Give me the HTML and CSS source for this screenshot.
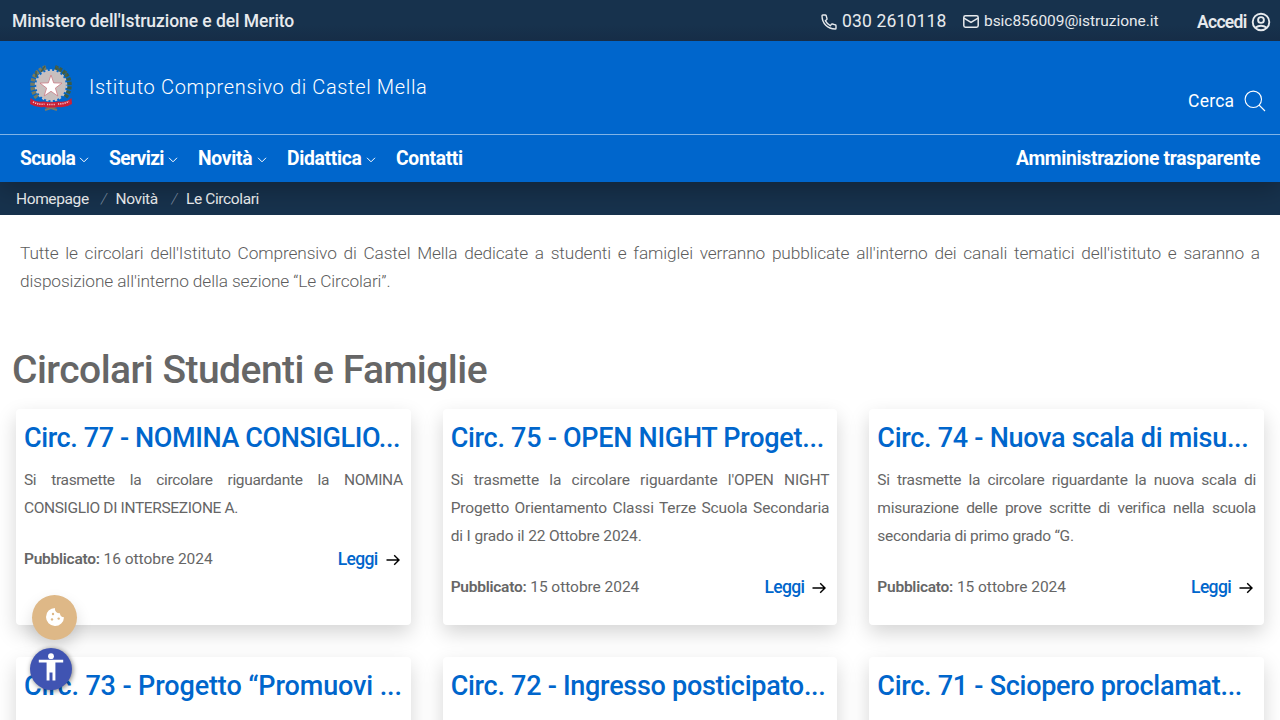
FILE: index.html
```
<!DOCTYPE html>
<html lang="it">
<head>
<meta charset="utf-8">
<title>Le Circolari - Istituto Comprensivo di Castel Mella</title>
<link rel="stylesheet" href="styles.css">
</head>
<body>
<svg class="defs" aria-hidden="true">
  <symbol id="chevron" viewBox="0 0 10 6"><path d="M1 .8l4 4 4-4" fill="none" stroke="currentColor" stroke-width="1"/></symbol>
  <symbol id="arrow" viewBox="0 0 14 12"><path d="M.5 6h12.2M8.2 1.2L13 6l-4.8 4.8" fill="none" stroke="#000" stroke-width="1.4"/></symbol>
</svg>
<div class="topbar">
  <a class="ministry">Ministero dell'Istruzione e del Merito</a>
  <div class="contacts">
    <a class="contact">
      <svg class="phone-icon" viewBox="0 0 16 16" fill="none" stroke="currentColor" stroke-width="1.4" stroke-linejoin="round"><path d="M1.800 1H4.200q.8 0 1 .8l.8 2.800q.2.700-.4 1.100L4.300 6.700q1.700 3.200 5 5l1-1.300q.4-.6 1.100-.4l2.800.8q.8.200.8 1v2.400q0 .8-.8.8Q8.500 15 4.800 11.300 1 7.500 1 1.800 1 1 1.800 1z"/></svg>
      <span class="phone">030 2610118</span>
    </a>
    <a class="contact">
      <svg class="mail-icon" viewBox="0 0 16 13" fill="none" stroke="currentColor" stroke-width="1.5"><rect x=".8" y=".8" width="14.400" height="11.400" rx="1.600"/><path d="M1 3.200l7 4.200 7-4.200"/></svg>
      <span class="email">bsic856009@istruzione.it</span>
    </a>
    <a class="login"><span>Accedi</span>
      <svg class="user-icon" viewBox="0 0 20 20" fill="none" stroke="currentColor" stroke-width="1.900"><circle cx="10" cy="10" r="8.300"/><circle cx="10" cy="8" r="2.900"/><path d="M4.200 15.800q5.800-4 11.600 0"/></svg>
    </a>
  </div>
</div>
<header class="header">
  <div class="brandbar">
    <svg class="emblem" viewBox="0 0 46 48">
      <path d="M14 41l15 5M32 41l-15 5" stroke="#7d7a62" stroke-width="2"/>
      <path d="M18 3.500Q4.500 8 4.500 21q0 8 5 13" fill="none" stroke="#747a62" stroke-width="4.500" stroke-dasharray="3 1.300"/>
      <path d="M27 3.500q14.500 4.500 14.500 17.500 0 8-5 13" fill="none" stroke="#3c5c44" stroke-width="4.500" stroke-dasharray="3 1.300"/>
      <path d="M17 2l-4 6M8 7l0 6M28 2l5 6M38 7l0 6" stroke="#4c5f45" stroke-width="1.500"/>
      <circle cx="23" cy="21.500" r="14.800" fill="#c8bfbe"/>
      <circle cx="23" cy="21.500" r="15.300" fill="none" stroke="#c8c4c6" stroke-width="2" stroke-dasharray="2.400 2"/>
      <path d="M23 11l2.700 7.900 8.300.2-6.600 5 2.400 7.900-6.800-4.700-6.800 4.700 2.400-7.900-6.600-5 8.300-.2z" fill="#fff" stroke="#cc7b85" stroke-width=".8"/>
      <path d="M2.500 34q6 5 13 3.500 7.500 1.500 15 0 7 1.500 13-3.500l.5 6q-6 4-13.500 3-7.500 1-15 0-7 1-13.500-3z" fill="#cb2036"/>
      <path d="M5 38q6 3 11.500 2M19 40.500h8M30 40q6 0 11-2.500" fill="none" stroke="#efc5cd" stroke-width="1.600" stroke-dasharray="1.200 1"/>
    </svg>
    <span class="school">Istituto Comprensivo di Castel Mella</span>
    <a class="search"><span>Cerca</span>
      <svg class="search-icon" viewBox="0 0 22 22" fill="none" stroke="currentColor" stroke-width="1.100"><circle cx="9.300" cy="9.300" r="8.200"/><path d="M15 15l6 6"/></svg>
    </a>
  </div>
  <nav class="nav">
    <a class="item scuola">Scuola</a><svg class="chev"><use href="#chevron"/></svg>
    <a class="item servizi">Servizi</a><svg class="chev"><use href="#chevron"/></svg>
    <a class="item novita">Novità</a><svg class="chev"><use href="#chevron"/></svg>
    <a class="item didattica">Didattica</a><svg class="chev"><use href="#chevron"/></svg>
    <a class="item contatti">Contatti</a>
    <a class="item admin">Amministrazione trasparente</a>
  </nav>
</header>
<div class="breadcrumb"><a class="home">Homepage</a><i>/</i><a class="sec">Novità</a><i>/</i><span>Le Circolari</span></div>
<main>
  <p class="intro">Tutte le circolari dell'Istituto Comprensivo di Castel Mella dedicate a studenti e famiglei verranno pubblicate all'interno dei canali tematici dell'istituto e saranno a disposizione all'interno della sezione “Le Circolari”.</p>
  <h1 class="heading">Circolari Studenti e Famiglie</h1>
  <div class="cards">
    <article class="card">
      <h2 class="title caps">Circ. 77 - NOMINA CONSIGLIO...</h2>
      <p class="text wide">Si trasmette la circolare riguardante la NOMINA CONSIGLIO DI INTERSEZIONE A.</p>
      <div class="meta"><span><b>Pubblicato:</b> 16 ottobre 2024</span><a class="read">Leggi<svg class="arrow"><use href="#arrow"/></svg></a></div>
    </article>
    <article class="card">
      <h2 class="title">Circ. 75 - OPEN NIGHT Proget...</h2>
      <p class="text">Si trasmette la circolare riguardante l'OPEN NIGHT Progetto Orientamento Classi Terze Scuola Secondaria di&nbsp;I grado il 22 Ottobre 2024.</p>
      <div class="meta"><span><b>Pubblicato:</b> 15 ottobre 2024</span><a class="read">Leggi<svg class="arrow"><use href="#arrow"/></svg></a></div>
    </article>
    <article class="card">
      <h2 class="title">Circ. 74 - Nuova scala di misu...</h2>
      <p class="text tight">Si trasmette la circolare riguardante la nuova scala di misurazione delle prove scritte di verifica nella scuola secondaria di primo grado “G.</p>
      <div class="meta"><span><b>Pubblicato:</b> 15 ottobre 2024</span><a class="read">Leggi<svg class="arrow"><use href="#arrow"/></svg></a></div>
    </article>
    <article class="card"><h2 class="title loose">Circ. 73 - Progetto “Promuovi ...</h2></article>
    <article class="card"><h2 class="title">Circ. 72 - Ingresso posticipato...</h2></article>
    <article class="card"><h2 class="title">Circ. 71 - Sciopero proclamat...</h2></article>
  </div>
</main>
<button class="cookie" aria-label="Cookie">
  <svg viewBox="0 0 18 18"><path d="M9 0a9 9 0 1 0 9 9.200 3.800 3.800 0 0 1-4-3.900A4.500 4.500 0 0 1 9 0z" fill="#fff"/><g fill="#deb887"><circle cx="7" cy="6" r="1.200"/><circle cx="6" cy="11.400" r="1.200"/><circle cx="12.700" cy="10.600" r="1.200"/></g></svg>
</button>
<button class="access" aria-label="Accessibilità">
  <svg viewBox="0 0 26 28" fill="#fff"><circle cx="13" cy="3.200" r="2.900"/><path d="M.8 6.800h24.400v2.600H17.400V27.600h-2.900v-8h-3v8H8.600V9.400H.8z"/></svg>
</button>
</body>
</html>
```
FILE: styles.css
```
* { box-sizing: border-box; }
body { margin: 0; height: 720px; overflow: hidden; background: #fff; color: #5c5c5c; font-family: Roboto, "Liberation Sans", sans-serif; }
main { height: 505px; overflow: hidden; }
a, span, h1, h2 { white-space: nowrap; }
h1, h2, p { margin: 0; }
svg { display: block; flex: none; }
.defs { position: absolute; width: 0; height: 0; }

.topbar { display: flex; justify-content: space-between; align-items: center; height: 41px; padding: 0 9px 0 12px; background: linear-gradient(#17324d 60%, #162d47); color: #e7eaed; }
.ministry { font-size: 17.5px; font-weight: 500; letter-spacing: -.06px; }
.contacts, .contact, .login { display: flex; align-items: center; }
.phone-icon { width: 16px; height: 16px; margin: 2px 5px 0 0; }
.phone { width: 105px; font-size: 17.5px; letter-spacing: .17px; }
.mail-icon { width: 16px; height: 13px; margin: 2px 5px 0 16px; }
.email { width: 174px; font-size: 15.5px; letter-spacing: -.04px; padding-top: 1px; }
.login { margin-left: 39px; padding-top: 2px; font-size: 17.5px; font-weight: 600; letter-spacing: -.7px; }
.login span { width: 54px; }
.user-icon { width: 20px; height: 20px; }

.header { position: relative; background: #06c; color: #fff; box-shadow: 0 8px 24px rgba(0, 0, 0, .25); clip-path: inset(0 0 -33px 0); }
.brandbar { display: flex; align-items: center; height: 94px; padding: 0 14px 0 28px; border-bottom: 1px solid #80b3e6; }
.emblem { width: 46px; height: 48px; }
.school { margin: -2px 0 0 15px; font-size: 20px; font-weight: 300; letter-spacing: .65px; }
.search { display: flex; align-items: center; margin: 26px 0 0 auto; font-size: 17.5px; letter-spacing: .25px; }
.search span { width: 56px; }
.search-icon { width: 22px; height: 22px; }
.nav { display: flex; align-items: center; height: 47px; padding: 0 20px; }
.item { font-size: 19.3px; font-weight: 700; letter-spacing: -.3px; }
.scuola, .servizi, .novita { width: 59px; }
.didattica { width: 79px; }
.scuola, .servizi { letter-spacing: -.65px; }
.chev { width: 10px; height: 6px; margin: 3px 20px 0 0; }
.admin { margin-left: auto; }

.breadcrumb { display: flex; align-items: center; height: 33px; padding-left: 16px; background: #17324d; color: #eef0f2; font-size: 15.5px; letter-spacing: -.38px; }
.home { width: 85px; }
.sec { width: 56px; }
.breadcrumb i { width: 14.500px; color: #7f90a3; font-weight: 300; }

.intro { height: 112px; padding: 24px 20px 0; font-size: 17.3px; font-weight: 300; line-height: 28px; letter-spacing: -.12px; text-align: justify; }
.heading { padding-left: 12px; height: 82px; line-height: 86px; font-size: 39px; font-weight: 500; letter-spacing: -.53px; color: #666; }
.cards { display: grid; grid-template-columns: repeat(3, 1fr); gap: 32px; padding: 0 16px; }
.card { height: 216px; padding: 12px 8px 0; background: #fff; border-radius: 4px; box-shadow: 0 8px 20px rgba(0, 0, 0, .17); }
.title { height: 45px; line-height: 34px; font-size: 27px; font-weight: 500; letter-spacing: -.28px; color: #06c; }
.title.caps { letter-spacing: -.4px; }
.title.loose { letter-spacing: -.12px; }
.text { font-size: 15.500px; line-height: 28px; letter-spacing: -.13px; text-align: justify; color: #666; }
.text.wide { letter-spacing: -.35px; }
.text.tight { letter-spacing: -.27px; }
.meta { display: flex; justify-content: space-between; margin-top: 23px; line-height: 28px; font-size: 15.500px; letter-spacing: -.04px; color: #666; }
.meta b { font-weight: 600; letter-spacing: -.25px; }
.read { display: flex; align-items: center; padding-right: 3px; font-size: 17.500px; font-weight: 500; letter-spacing: -.650px; color: #06c; }
.arrow { width: 14px; height: 12px; margin: 2px 0 0 8px; }

button { position: fixed; display: grid; place-items: center; padding: 0; border: 0; border-radius: 50%; }
.cookie { left: 32px; top: 595px; width: 45px; height: 45px; background: #deb887; box-shadow: 0 8px 16px rgba(0, 0, 0, .15); }
.cookie svg { width: 18px; height: 18px; margin-top: -1px; }
.access { left: 30px; top: 648px; width: 42px; height: 42px; background: #4054b2; box-shadow: 1px 1px 5px rgba(0, 0, 0, .5); }
.access svg { width: 26px; height: 28px; margin-top: -4px; }
```
